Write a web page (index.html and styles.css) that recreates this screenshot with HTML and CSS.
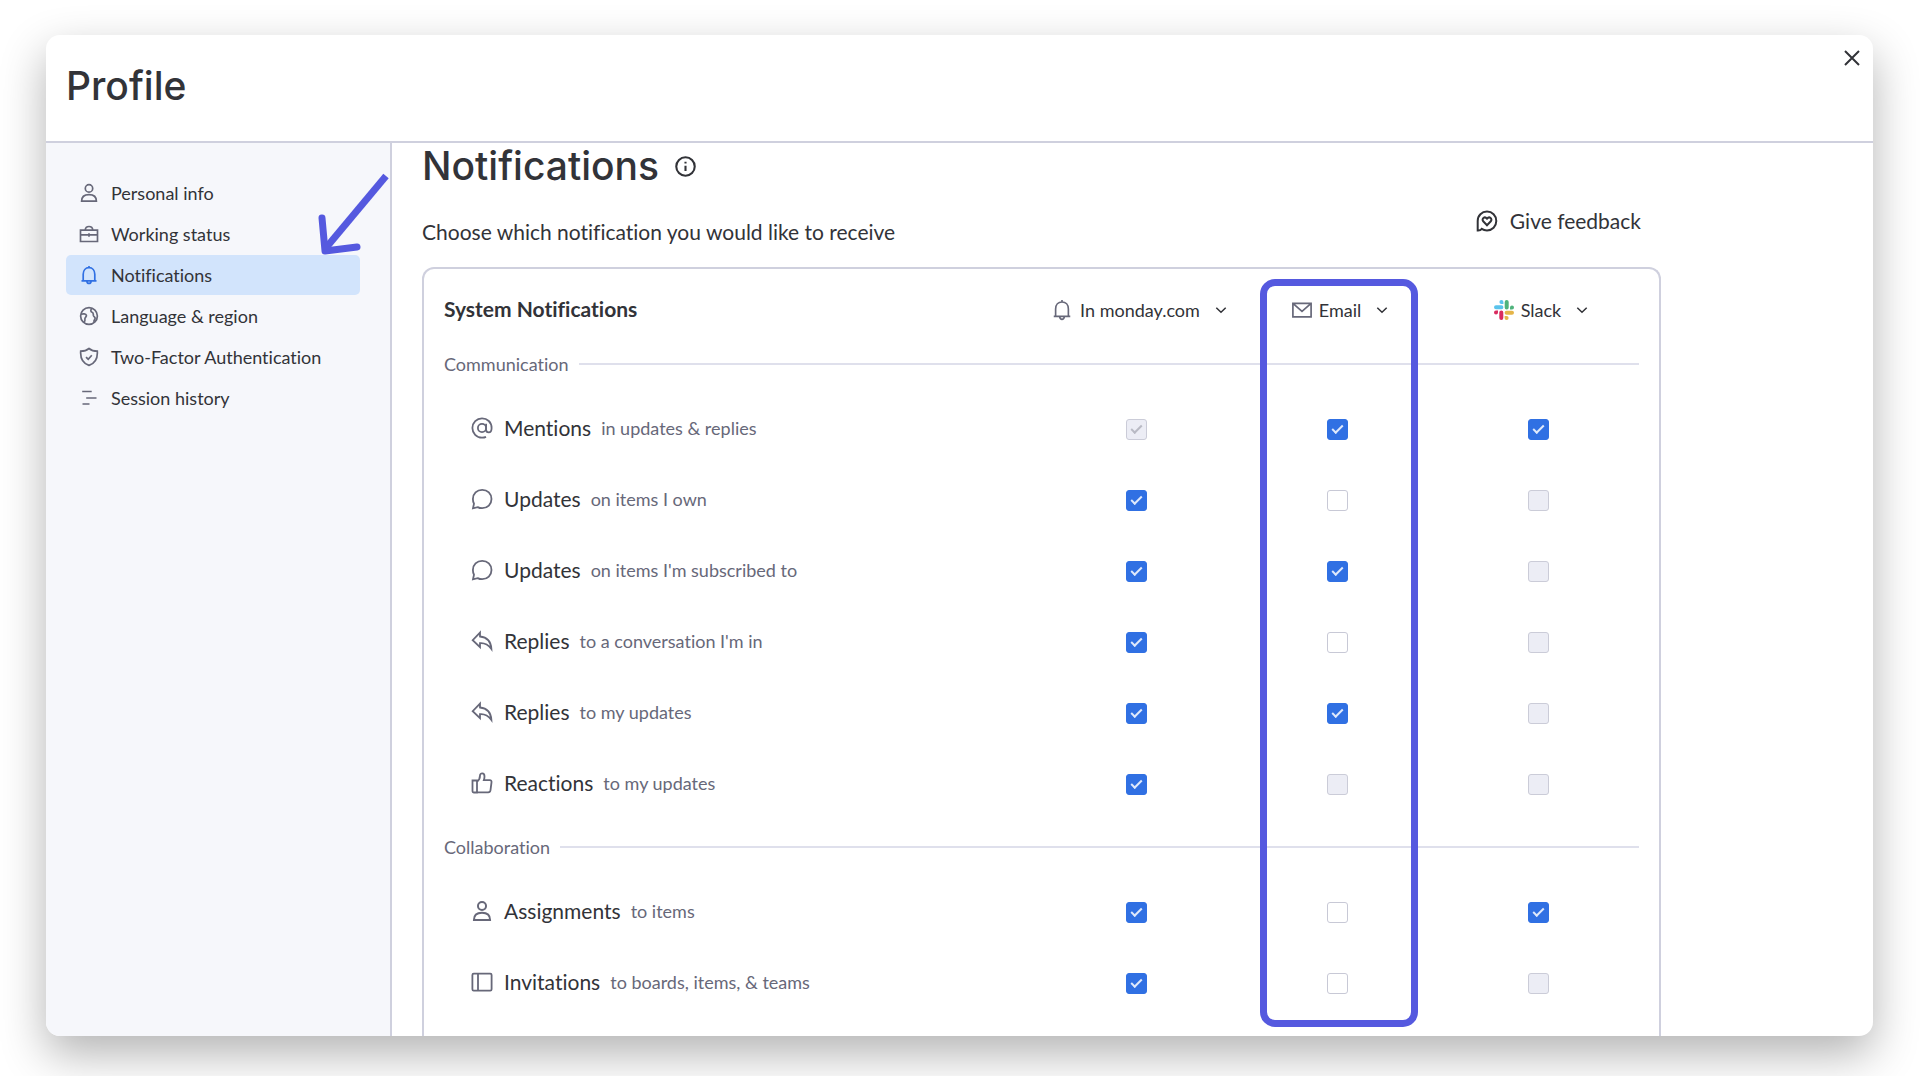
FILE: index.html
```html
<!DOCTYPE html>
<html lang="en">
<head>
<meta charset="utf-8">
<title>Profile</title>
<link rel="stylesheet" href="styles.css">
</head>
<body>
<svg class="sprite" aria-hidden="true">
  <symbol id="i-person" viewBox="0 0 20 20"><circle cx="10" cy="5.4" r="3.7"/><path d="M2.6 18.2c0-4.400 3-6.600 7.400-6.600s7.400 2.200 7.400 6.600z"/></symbol>
  <symbol id="i-case" viewBox="0 0 20 20"><path d="M1.500 6.200h17v11.300h-17zM1.500 10.800h17M10 9.300v3.400M6.200 6c.2-2.400 1.600-3.500 3.800-3.500s3.600 1.100 3.800 3.500"/></symbol>
  <symbol id="i-bell" viewBox="0 0 20 20"><path d="M2.500 15.800h15M4.200 15.800V9.200c0-4 2.400-6.500 5.800-6.500s5.800 2.500 5.800 6.500v6.600M10 1v1.700M7.800 16c.3 1.700 1.100 2.500 2.200 2.500s1.900-.8 2.200-2.500"/></symbol>
  <symbol id="i-globe" viewBox="0 0 20 20"><circle cx="10" cy="10" r="8.400"/><path d="M2 8.300c2-.9 4.900-.6 5.400 1 .5 1.500-1.900 2-1.500 3.700.3 1.200-.3 2.900-1.100 3.700M12.900 2.300c-1.500 1.400-1.400 3.400.2 3.900 1.700.5 1 2.200 1.400 3.600.5 1.300 1.700 1.300 1.600 2.600-.1 1.200-1.200 1.700-1.300 3.500"/></symbol>
  <symbol id="i-shield" viewBox="0 0 20 20"><path d="M10 1.500c2.400 2 5 2.700 8.300 2.700.5 6.800-2.100 12-8.300 14.200C3.800 16.200 1.200 11 1.700 4.200 5 4.200 7.600 3.500 10 1.500zM7 10.200l2.200 2 3.600-4"/></symbol>
  <symbol id="i-lines" viewBox="0 0 20 20"><path d="M3.200 3.500h9.500M7.200 10h10.300M3.500 16h7"/></symbol>
  <symbol id="i-at" viewBox="0 0 24 24"><circle cx="12" cy="12" r="4.100"/><path d="M16.100 7.700v6c0 1.700 1 2.700 2.600 2.700 2 0 2.900-1.700 2.900-4.400C21.600 6.300 17.300 2.300 12 2.300S2.400 6.600 2.400 12 6.600 21.700 12 21.700c1.500 0 2.800-.2 4-.8"/></symbol>
  <symbol id="i-bubble" viewBox="0 0 24 24"><path d="M3 21.300l1-4.600C3.100 15.200 2.900 13.600 2.900 12c0-5.200 4-9.200 9.300-9.200s9.300 4 9.300 9.200-4 9.200-9.300 9.200c-1.600 0-3.100-.3-4.500-1.100z"/></symbol>
  <symbol id="i-reply" viewBox="0 0 24 24"><path d="M10 3.600L2.700 11.200l7.300 7v-4c4.800-.4 8.200 1.500 11.400 5.800-.4-7.200-4.300-11.800-11.400-12.500z"/></symbol>
  <symbol id="i-thumb" viewBox="0 0 24 24"><path d="M2.500 9.500H7v12H3.700c-.8 0-1.200-.5-1.200-1.200zM7 10.700c2.200-1.600 3-3.200 3-6.200 0-2.900 4.500-3 4.500.9 0 1.600-.3 2.600-.7 3.800h6c1.300 0 1.900.9 1.700 2.100l-1 7.900c-.2 1.300-.9 2.100-2.300 2.100H7"/></symbol>
  <symbol id="i-board" viewBox="0 0 24 24"><rect x="2.400" y="3.600" width="19.200" height="17" rx="1.300"/><path d="M8 3.600v17"/></symbol>
  <symbol id="i-mail" viewBox="0 0 20 20"><path d="M.9 3.400h18.200v13.400H.9zM1.200 3.700L10 11.300l8.800-7.600"/></symbol>
  <symbol id="i-down" viewBox="0 0 12 12"><path d="M1.300 3.700L6 8.300l4.700-4.600"/></symbol>
  <symbol id="i-slack" viewBox="0 0 20 20"><g stroke="none"><path fill="#5ac3ec" d="M7.400 0a2 2 0 0 1 2 2v2h-2a2 2 0 0 1 0-4zM2 5.300h5.400a2 2 0 0 1 0 4H2a2 2 0 0 1 0-4z"/><path fill="#4fb37c" d="M20 7.400a2 2 0 0 1-2 2h-2v-2a2 2 0 0 1 4 0zM14.700 2v5.400a2 2 0 0 1-4 0V2a2 2 0 0 1 4 0z"/><path fill="#e5b548" d="M12.600 20a2 2 0 0 1-2-2v-2h2a2 2 0 0 1 0 4zM18 14.700h-5.400a2 2 0 0 1 0-4H18a2 2 0 0 1 0 4z"/><path fill="#d92b5f" d="M0 12.600a2 2 0 0 1 2-2h2v2a2 2 0 0 1-4 0zM5.300 18v-5.400a2 2 0 0 1 4 0V18a2 2 0 0 1-4 0z"/></g></symbol>
</svg>

<div class="window">
  <header class="window-header">
    <h1 class="title">Profile</h1>
    <button class="close" type="button" aria-label="Close"><svg viewBox="0 0 16 16"><path d="M1 1l14 14M15 1L1 15"/></svg></button>
  </header>

  <div class="window-body">
    <nav class="sidebar" aria-label="Profile sections">
      <a class="nav-item" href="#personal"><svg class="icon"><use href="#i-person"/></svg>Personal info</a>
      <a class="nav-item" href="#status"><svg class="icon"><use href="#i-case"/></svg>Working status</a>
      <a class="nav-item active" href="#notifications" aria-current="page"><svg class="icon"><use href="#i-bell"/></svg>Notifications</a>
      <a class="nav-item" href="#language"><svg class="icon"><use href="#i-globe"/></svg>Language &amp; region</a>
      <a class="nav-item" href="#two-factor"><svg class="icon"><use href="#i-shield"/></svg>Two-Factor Authentication</a>
      <a class="nav-item" href="#sessions"><svg class="icon"><use href="#i-lines"/></svg>Session history</a>
      <svg class="pointer" viewBox="0 0 80 90" aria-hidden="true"><path d="M76 7L15 80"/><path class="head" d="M12 49l3 33 32-4"/></svg>
    </nav>

    <main class="content">
      <h2 class="heading">Notifications
        <svg class="info" viewBox="0 0 20 20"><circle cx="10" cy="10" r="8.800"/><path d="M10 9.300v5M10 5.400v1.700"/></svg>
      </h2>
      <div class="intro">
        <p class="lead">Choose which notification you would like to receive</p>
        <button class="feedback" type="button">
          <svg viewBox="0 0 22 22"><path d="M1.700 20.500V11C1.700 5.500 5.800 1.600 11 1.600s9.300 4 9.300 9.400-4.100 9.400-9.300 9.400c-1.900 0-3.700-.5-5.200-1.500-1 1.200-2.400 1.700-4.100 1.600z"/><path d="M11 15.200l-3.800-3.900c-2-2.300 1.300-5.600 3.800-2.700 2.500-2.900 5.800.4 3.800 2.700z"/></svg>
          Give feedback
        </button>
      </div>

      <section class="card">
        <table class="settings">
          <thead>
            <tr>
              <th class="name" scope="col">System Notifications</th>
              <th class="channel" scope="col"><button class="menu" type="button"><svg class="icon large"><use href="#i-bell"/></svg>In monday.com<svg class="chevron"><use href="#i-down"/></svg></button></th>
              <th class="channel" scope="col"><button class="menu" type="button"><svg class="icon"><use href="#i-mail"/></svg>Email<svg class="chevron"><use href="#i-down"/></svg></button></th>
              <th class="channel" scope="col"><button class="menu" type="button"><svg class="icon"><use href="#i-slack"/></svg>Slack<svg class="chevron"><use href="#i-down"/></svg></button></th>
            </tr>
          </thead>
          <tbody>
            <tr class="group"><th colspan="4" scope="rowgroup"><div class="group-label">Communication</div></th></tr>
            <tr>
              <th scope="row"><div class="event"><svg><use href="#i-at"/></svg><span>Mentions</span><small>in updates &amp; replies</small></div></th>
              <td><input type="checkbox" aria-label="Mentions in monday.com" checked disabled></td>
              <td><input type="checkbox" aria-label="Mentions by email" checked></td>
              <td><input type="checkbox" aria-label="Mentions in Slack" checked></td>
            </tr>
            <tr>
              <th scope="row"><div class="event"><svg><use href="#i-bubble"/></svg><span>Updates</span><small>on items I own</small></div></th>
              <td><input type="checkbox" aria-label="Updates on owned items in monday.com" checked></td>
              <td><input type="checkbox" aria-label="Updates on owned items by email"></td>
              <td><input type="checkbox" aria-label="Updates on owned items in Slack" disabled></td>
            </tr>
            <tr>
              <th scope="row"><div class="event"><svg><use href="#i-bubble"/></svg><span>Updates</span><small>on items I'm subscribed to</small></div></th>
              <td><input type="checkbox" aria-label="Updates on subscribed items in monday.com" checked></td>
              <td><input type="checkbox" aria-label="Updates on subscribed items by email" checked></td>
              <td><input type="checkbox" aria-label="Updates on subscribed items in Slack" disabled></td>
            </tr>
            <tr>
              <th scope="row"><div class="event"><svg><use href="#i-reply"/></svg><span>Replies</span><small>to a conversation I'm in</small></div></th>
              <td><input type="checkbox" aria-label="Replies to conversations in monday.com" checked></td>
              <td><input type="checkbox" aria-label="Replies to conversations by email"></td>
              <td><input type="checkbox" aria-label="Replies to conversations in Slack" disabled></td>
            </tr>
            <tr>
              <th scope="row"><div class="event"><svg><use href="#i-reply"/></svg><span>Replies</span><small>to my updates</small></div></th>
              <td><input type="checkbox" aria-label="Replies to my updates in monday.com" checked></td>
              <td><input type="checkbox" aria-label="Replies to my updates by email" checked></td>
              <td><input type="checkbox" aria-label="Replies to my updates in Slack" disabled></td>
            </tr>
            <tr>
              <th scope="row"><div class="event"><svg><use href="#i-thumb"/></svg><span>Reactions</span><small>to my updates</small></div></th>
              <td><input type="checkbox" aria-label="Reactions in monday.com" checked></td>
              <td><input type="checkbox" aria-label="Reactions by email" disabled></td>
              <td><input type="checkbox" aria-label="Reactions in Slack" disabled></td>
            </tr>
          </tbody>
          <tbody>
            <tr class="group"><th colspan="4" scope="rowgroup"><div class="group-label">Collaboration</div></th></tr>
            <tr>
              <th scope="row"><div class="event"><svg viewBox="-1 -1 22 22"><use href="#i-person" width="20" height="20"/></svg><span>Assignments</span><small>to items</small></div></th>
              <td><input type="checkbox" aria-label="Assignments in monday.com" checked></td>
              <td><input type="checkbox" aria-label="Assignments by email"></td>
              <td><input type="checkbox" aria-label="Assignments in Slack" checked></td>
            </tr>
            <tr>
              <th scope="row"><div class="event"><svg><use href="#i-board"/></svg><span>Invitations</span><small>to boards, items, &amp; teams</small></div></th>
              <td><input type="checkbox" aria-label="Invitations in monday.com" checked></td>
              <td><input type="checkbox" aria-label="Invitations by email"></td>
              <td><input type="checkbox" aria-label="Invitations in Slack" disabled></td>
            </tr>
          </tbody>
        </table>
        <div class="highlight"></div>
      </section>
    </main>
  </div>
</div>
</body>
</html>
```
FILE: styles.css
```css
:root {
  --text: #323338;
  --muted: #676879;
  --line: #cfd0de;
  --soft-line: #dfe0ec;
  --primary: #3070e3;
  --accent: #5559df;
}

* { box-sizing: border-box; }

body {
  display: flex;
  min-height: 100vh;
  margin: 0;
  padding: 35px 47px 40px 46px;
  background: #fff;
  color: var(--text);
  font-family: Lato, "Liberation Sans", sans-serif;
  font-size: 18px;
  font-variant-ligatures: no-common-ligatures;
  line-height: 24px;
}

svg {
  flex: none;
  fill: none;
  stroke: currentColor;
  stroke-width: 2;
}

.sprite { position: absolute; width: 0; height: 0; }

button {
  padding: 0;
  border: 0;
  background: none;
  color: inherit;
  font: inherit;
  font-variant-ligatures: inherit;
  cursor: pointer;
}

.window {
  display: flex;
  flex: 1;
  flex-direction: column;
  overflow: hidden;
  border-radius: 14px;
  background: #fff;
  box-shadow: 0 18px 46px rgba(0, 0, 0, .3);
}

.window-header {
  display: flex;
  align-items: flex-start;
  justify-content: space-between;
  min-height: 108px;
  padding: 15px 13px 0 20px;
  border-bottom: 2px solid var(--line);
}

.title,
.heading {
  margin: 0;
  font-family: Inter, "Liberation Sans", sans-serif;
  font-weight: 500;
  font-size: 39px;
  line-height: 46px;
}

.title { padding-top: 13px; }

.close svg {
  display: block;
  width: 16px;
  height: 16px;
}

.window-body { display: flex; flex: 1; }

.sidebar {
  position: relative;
  display: flex;
  flex: none;
  flex-direction: column;
  gap: 1px;
  width: 346px;
  padding: 30px 30px 30px 20px;
  border-right: 2px solid var(--line);
  background: #f6f7fb;
}

.nav-item {
  display: flex;
  align-items: center;
  gap: 12px;
  height: 40px;
  padding: 0 13px;
  border-radius: 5px;
  color: var(--text);
  text-decoration: none;
}

.nav-item.active { background: #d2e4fc; }
.nav-item.active .icon { color: var(--primary); }

.icon {
  width: 20px;
  height: 20px;
  color: var(--muted);
  stroke-width: 1.7;
}

.icon.large {
  width: 22px;
  height: 22px;
  stroke-width: 1.5;
}

.pointer {
  position: absolute;
  top: 26px;
  right: 0;
  width: 80px;
  height: 90px;
  color: var(--accent);
  stroke-width: 7;
}

.pointer .head { stroke-linecap: round; stroke-linejoin: round; }

.content {
  display: flex;
  flex: 1;
  flex-direction: column;
  max-width: 1269px;
  padding-left: 30px;
}

.heading {
  display: flex;
  align-items: center;
  gap: 16px;
}

.info { width: 21px; height: 21px; }

.intro {
  display: flex;
  align-items: flex-start;
  justify-content: space-between;
  height: 78px;
  padding: 20px 20px 0 0;
}

.lead {
  margin: 0;
  padding-top: 11px;
  font-size: 21px;
}

.feedback {
  display: flex;
  align-items: center;
  gap: 12px;
  font-size: 21px;
}

.feedback svg { width: 22px; height: 22px; }

.card {
  position: relative;
  flex: 1;
  padding: 13px 20px 0;
  border: 2px solid var(--line);
  border-bottom: 0;
  border-radius: 12px 12px 0 0;
}

.settings {
  width: 100%;
  border-collapse: collapse;
  table-layout: fixed;
}

.settings th,
.settings td {
  height: 71px;
  padding: 0;
  font-weight: 400;
  text-align: center;
}

.settings th[scope="row"],
.settings .group th { text-align: left; }

.settings thead th { height: 53px; }

.settings .name {
  font-weight: 700;
  font-size: 21px;
  text-align: left;
}

.channel { width: 201px; }

.menu {
  display: inline-flex;
  align-items: center;
  gap: 7px;
  padding-left: 5px;
  vertical-align: middle;
}

.chevron {
  width: 12px;
  height: 12px;
  margin-left: 8px;
  stroke-width: 1.5;
}

.settings .group th { height: 57px; }

.group-label {
  display: flex;
  align-items: center;
  gap: 10px;
  color: var(--muted);
}

.group-label::after {
  flex: 1;
  height: 2px;
  background: var(--soft-line);
  content: "";
}

.event {
  display: flex;
  align-items: center;
  gap: 10px;
  padding-left: 26px;
  font-size: 21px;
}

.event svg {
  width: 24px;
  height: 24px;
  color: var(--muted);
  stroke-width: 1.8;
}

.event small {
  color: var(--muted);
  font-size: 18px;
}

input[type="checkbox"] {
  display: inline-grid;
  place-items: center;
  width: 21px;
  height: 21px;
  margin: 0;
  border: 1px solid #c8c9d6;
  border-radius: 3px;
  background: #fff;
  appearance: none;
  vertical-align: middle;
}

input[type="checkbox"]:checked { border-color: var(--primary); background: var(--primary); color: #dfe9fb; }
input[type="checkbox"]:disabled { border-color: #cbccd8; background: #ecedf5; color: #b9bac4; }

input[type="checkbox"]:checked::after {
  width: 9px;
  height: 4px;
  margin-bottom: 3px;
  border: solid currentColor;
  border-width: 0 0 2px 2px;
  transform: rotate(-45deg);
  content: "";
}

.highlight {
  position: absolute;
  top: 10px;
  right: 241px;
  bottom: 9px;
  width: 158px;
  border: 7px solid var(--accent);
  border-radius: 15px;
  pointer-events: none;
}
```
